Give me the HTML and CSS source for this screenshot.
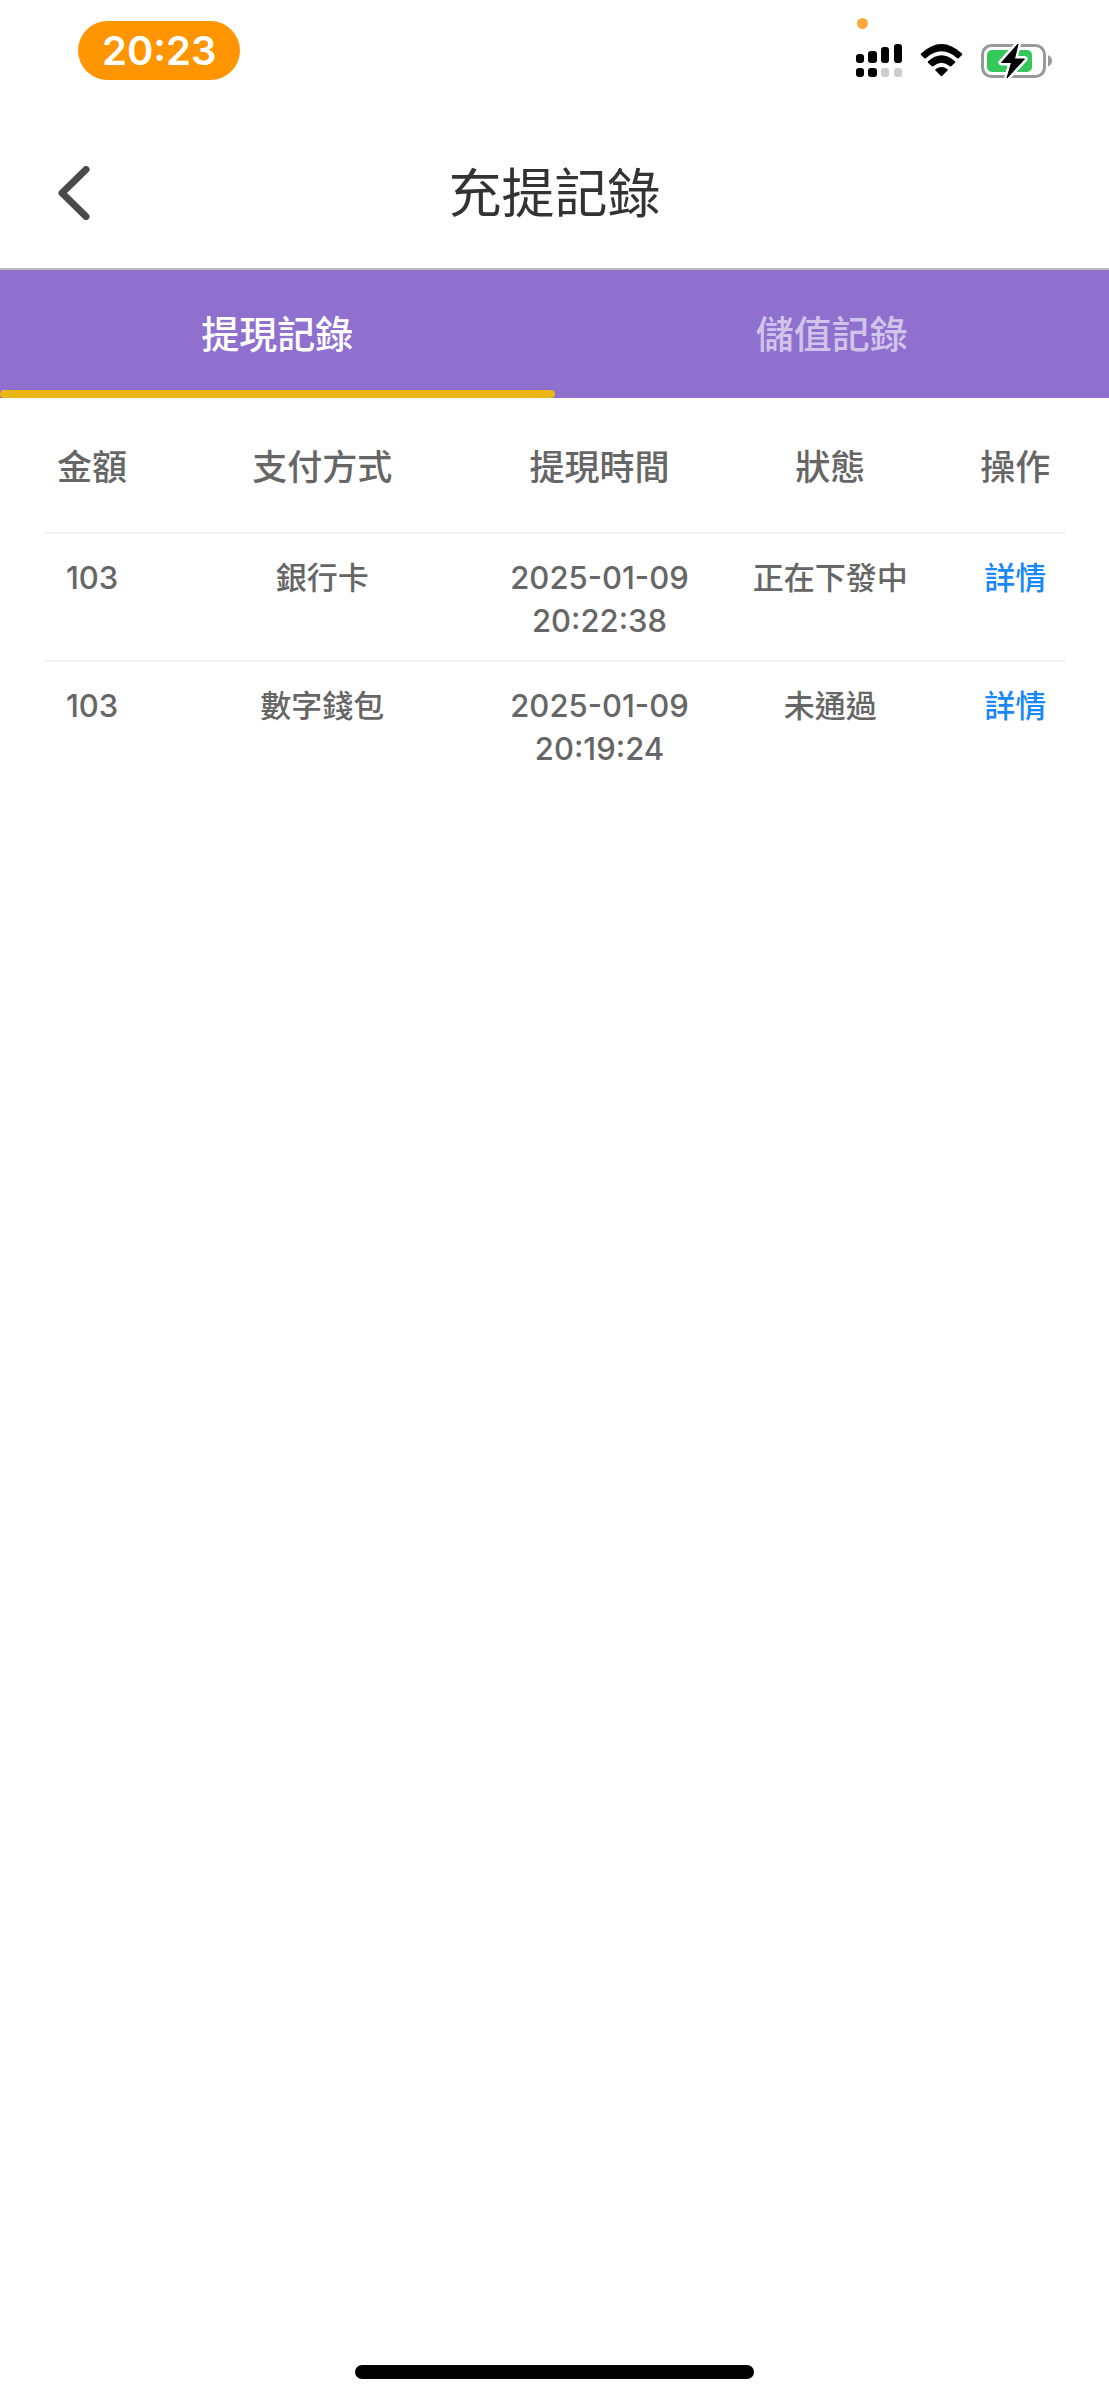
FILE: index.html
```
<!DOCTYPE html>
<html lang="zh-Hant">
<head>
    <meta charset="UTF-8">
    <meta name="viewport" content="width=device-width, initial-scale=1">
    <title>充提記錄</title>
    <link rel="stylesheet" href="styles.css">
</head>
<body>

<div class="status-bar">
    <div class="clock">20:23</div>
    <div class="status-right">
        <span class="mic-dot"></span>
        <div class="status-icons">
            <svg class="icon-signal" viewBox="0 0 46 34" width="46" height="34">
                <rect x="0" y="10" width="8" height="9" rx="3"/>
                <rect x="12" y="7" width="9" height="12" rx="3"/>
                <rect x="25" y="3" width="8" height="16" rx="3"/>
                <rect x="38" y="0" width="8" height="19" rx="3"/>
                <rect x="0" y="24" width="8" height="9" rx="3"/>
                <rect x="12" y="24" width="9" height="9" rx="3"/>
                <rect x="25" y="24" width="8" height="9" rx="3" fill="#ccc"/>
                <rect x="38" y="24" width="8" height="9" rx="3" fill="#ccc"/>
            </svg>
            <svg class="icon-wifi" viewBox="0 0 43 34" width="43" height="34">
                <path d="M1 9.5 Q21.5 -9.5 42 9.5 Q42.5 10.3 42 11 L38.6 14.3 Q38 14.8 37.2 14.2 Q21.5 0.5 5.8 14.2 Q5 14.8 4.4 14.3 L1 11 Q0.5 10.3 1 9.5 Z"/>
                <path d="M8 17.3 Q21.5 5.2 35 17.3 Q35.6 18 35 18.7 L31.2 22.3 Q30.6 22.8 29.9 22.2 Q21.5 15.2 13.1 22.2 Q12.4 22.8 11.8 22.3 L8 18.7 Q7.4 18 8 17.3 Z"/>
                <path d="M15.5 25.3 Q21.5 20.6 27.5 25.3 Q28 26 27.5 26.6 L22.3 31.8 Q21.5 32.5 20.7 31.8 L15.5 26.6 Q15 26 15.5 25.3 Z"/>
            </svg>
            <svg class="icon-battery" viewBox="0 0 71 34" width="71" height="34">
                <rect x="1.5" y="1.5" width="62" height="31" rx="9" fill="none" stroke="#999" stroke-width="3"/>
                <rect x="6" y="6" width="45" height="22" rx="5" fill="#34c759"/>
                <path d="M67 11 Q71 13 71 17 Q71 21 67 22.5 Z" fill="#999"/>
                <path d="M37 0 L20.5 18.5 H30.5 L26 34 L43.5 15 H33.5 Z" fill="#fff" stroke="#fff" stroke-width="6" stroke-linejoin="round"/>
                <path d="M37 0 L20.5 18.5 H30.5 L26 34 L43.5 15 H33.5 Z" stroke="#000" stroke-width="1" stroke-linejoin="round"/>
            </svg>
        </div>
    </div>
</div>

<header class="nav-bar">
    <button type="button" class="back" aria-label="返回">
        <svg viewBox="0 0 32 54" width="32" height="54">
            <path d="M28 3.5 L4 27 L28 50.5" fill="none" stroke="#4a4a4a" stroke-width="7" stroke-linecap="round" stroke-linejoin="round"/>
        </svg>
    </button>
    <h1>充提記錄</h1>
</header>

<nav class="tabs">
    <button type="button" class="tab active">提現記錄</button>
    <button type="button" class="tab">儲值記錄</button>
</nav>

<main class="records">
    <table>
        <thead>
            <tr>
                <th class="col-amount">金額</th>
                <th class="col-method">支付方式</th>
                <th class="col-time">提現時間</th>
                <th class="col-status">狀態</th>
                <th class="col-action">操作</th>
            </tr>
        </thead>
        <tbody>
            <tr>
                <td>103</td>
                <td>銀行卡</td>
                <td>2025-01-09 20:22:38</td>
                <td>正在下發中</td>
                <td><a href="#">詳情</a></td>
            </tr>
            <tr>
                <td>103</td>
                <td>數字錢包</td>
                <td>2025-01-09 20:19:24</td>
                <td>未通過</td>
                <td><a href="#">詳情</a></td>
            </tr>
        </tbody>
    </table>
</main>

<footer class="home-bar"><span></span></footer>

</body>
</html>
```
FILE: styles.css
```
* {
    box-sizing: border-box;
}

body {
    margin: 0;
    min-height: 100vh;
    display: flex;
    flex-direction: column;
    background: #fff;
    color: #666;
    font-family: Inter, "Noto Sans CJK TC", sans-serif;
}

button {
    border: none;
    background: none;
    padding: 0;
    font-family: inherit;
    cursor: pointer;
}

svg {
    display: block;
}

/* status bar */
.status-bar {
    display: flex;
    justify-content: space-between;
    align-items: flex-start;
    height: 118px;
    padding: 0 57px 0 78px;
}

.clock {
    margin-top: 21px;
    padding: 0 24px;
    border-radius: 30px;
    background: #ff9500;
    color: #fff;
    font-size: 40px;
    font-weight: 600;
    line-height: 59px;
}

.status-right {
    padding-top: 18px;
}

.mic-dot {
    display: block;
    width: 11px;
    height: 11px;
    margin-left: 1px;
    border-radius: 50%;
    background: #ffa938;
}

.status-icons {
    display: flex;
    gap: 18px;
    margin-top: 15px;
}

/* title bar */
.nav-bar {
    display: grid;
    grid-template-columns: 1fr auto 1fr;
    align-items: center;
    height: 152px;
    padding: 0 58px;
    border-bottom: 2px solid #bbb;
}

.back {
    justify-self: start;
}

.nav-bar h1 {
    margin: 0;
    padding-bottom: 6px;
    color: #333;
    font-size: 53px;
    font-weight: 400;
}

/* tabs */
.tabs {
    display: flex;
    background: #8f70cf;
}

.tab {
    position: relative;
    flex: 1;
    height: 128px;
    padding-bottom: 6px;
    color: rgba(255, 255, 255, 0.6);
    font-size: 38px;
    font-weight: 500;
}

.tab.active {
    color: #fff;
}

.tab.active::after {
    content: "";
    position: absolute;
    left: 0;
    right: 0;
    bottom: 0;
    height: 8px;
    border-radius: 4px;
    background: #ebb715;
}

/* records */
.records {
    flex: 1;
    padding: 0 43px;
}

table {
    width: 100%;
    table-layout: fixed;
    border-collapse: collapse;
    text-align: center;
}

th {
    height: 135px;
    padding: 0 0 2px;
    font-size: 35px;
    font-weight: 500;
}

td {
    padding: 22px 0 18px;
    border-top: 2px solid #f5f5f5;
    font-size: 31px;
    font-weight: 500;
    line-height: 43px;
    vertical-align: top;
}

.col-amount {
    width: 9.6%;
}

.col-method {
    width: 35.4%;
}

.col-time {
    width: 18.8%;
}

.col-status {
    width: 26.3%;
}

td a {
    color: #1989fa;
    text-decoration: none;
}

.home-bar {
    padding-bottom: 21px;
}

.home-bar span {
    display: block;
    width: 36%;
    height: 14px;
    margin: 0 auto;
    border-radius: 7px;
    background: #000;
}
```
